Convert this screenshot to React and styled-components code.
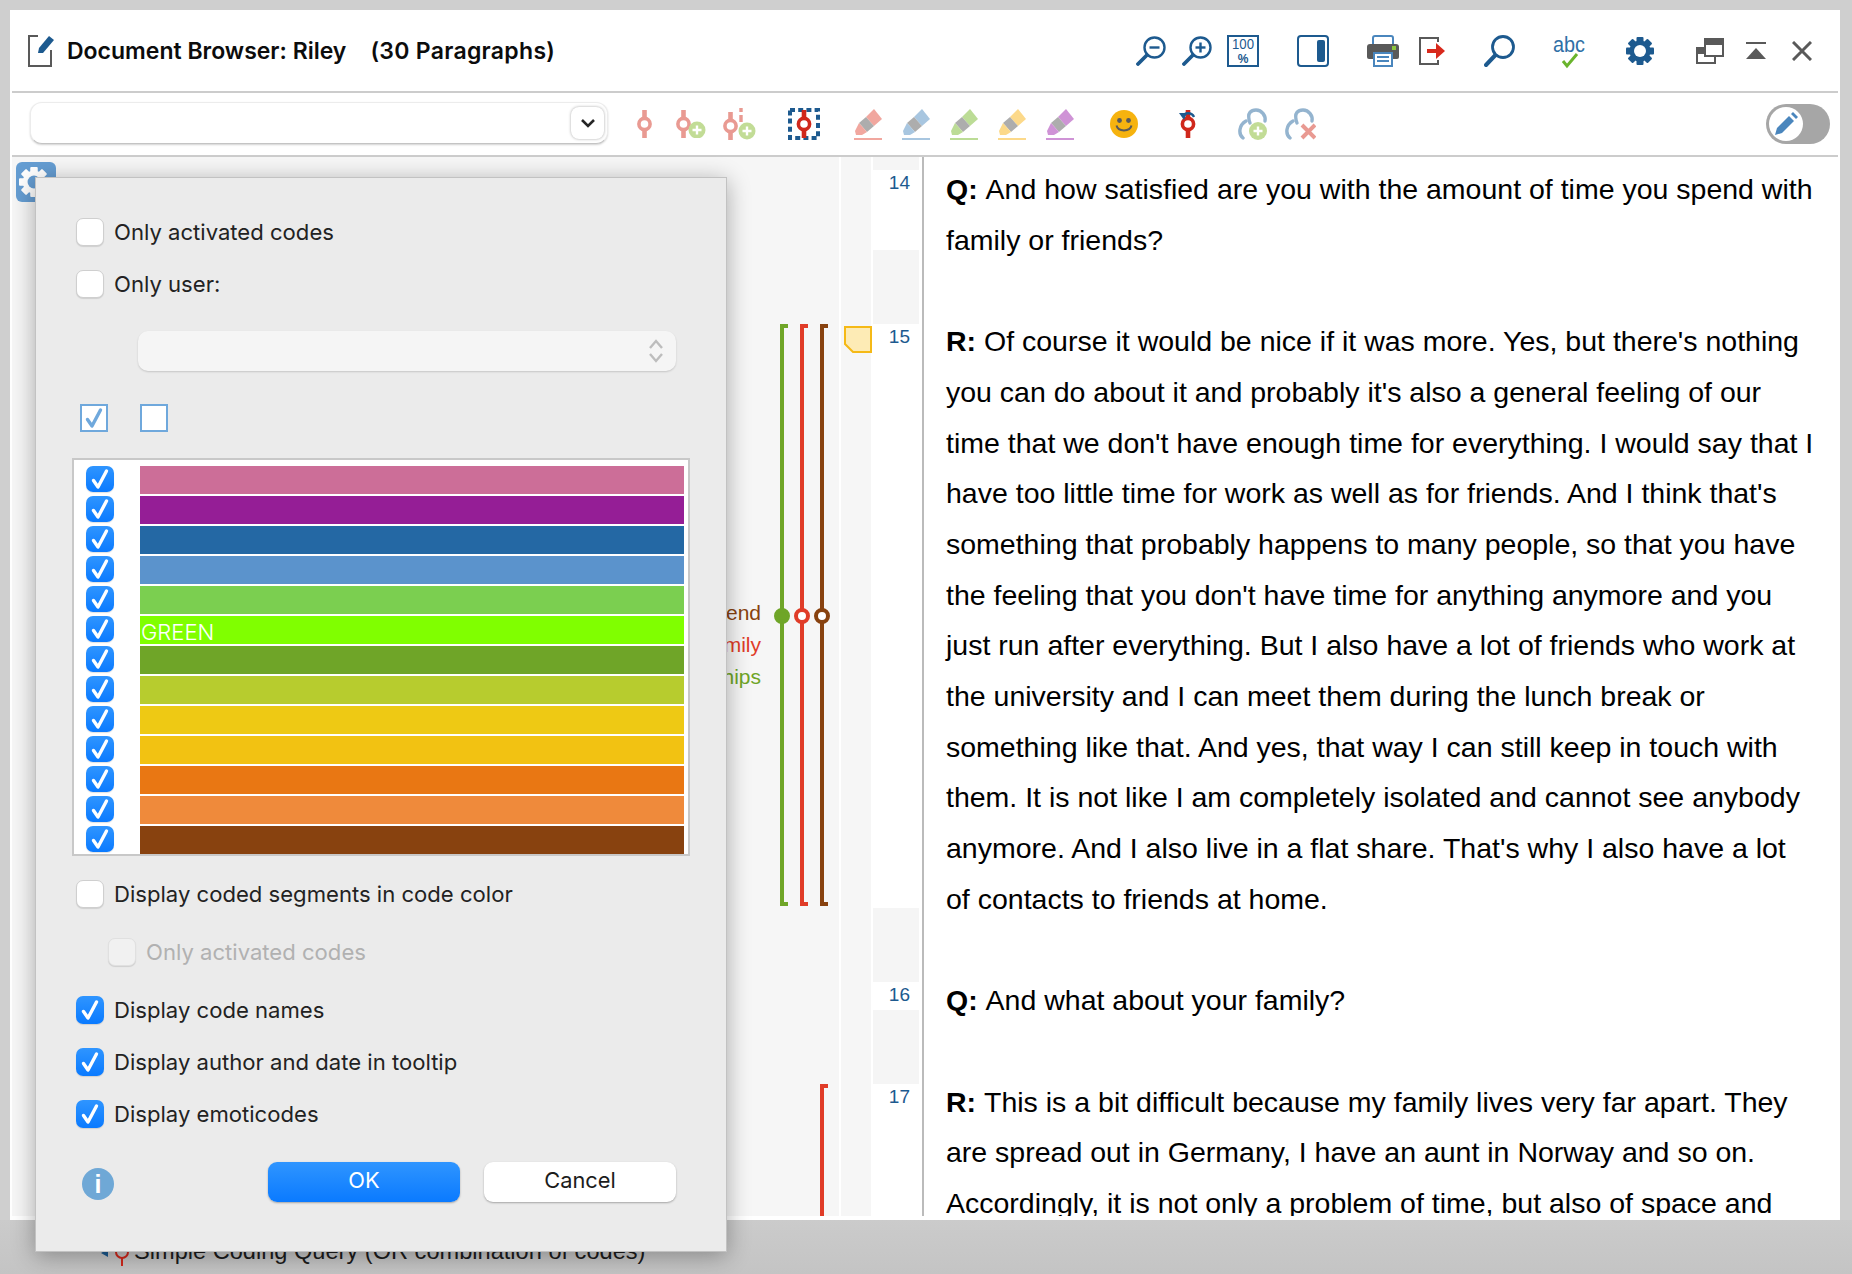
import styled, { createGlobalStyle } from "styled-components";

const NAVY = "#1d5a8f";
const GREY_ICON = "#595959";
const SANS = `"Liberation Sans", Arial, sans-serif`;
const UI = `Inter, "Noto Sans", sans-serif`;

const CODE_COLORS = [
  "#cc6e98", "#951e96", "#2468a4", "#5b93cc", "#7bcf50", "#80ff00", "#6fa528",
  "#b7cc2e", "#eec914", "#f2c212", "#e97713", "#ef8a3b", "#88420f",
];

const PENS = ["#f1a79f", "#a8c6e0", "#bcdc96", "#fcd98a", "#cf93d6"];

const PARAGRAPHS = [
  {
    speaker: "Q:",
    lines: [
      "And how satisfied are you with the amount of time you spend with",
      "family or friends?",
    ],
  },
  {
    speaker: "R:",
    lines: [
      "Of course it would be nice if it was more. Yes, but there's nothing",
      "you can do about it and probably it's also a general feeling of our",
      "time that we don't have enough time for everything. I would say that I",
      "have too little time for work as well as for friends. And I think that's",
      "something that probably happens to many people, so that you have",
      "the feeling that you don't have time for anything anymore and you",
      "just run after everything. But I also have a lot of friends who work at",
      "the university and I can meet them during the lunch break or",
      "something like that. And yes, that way I can still keep in touch with",
      "them. It is not like I am completely isolated and cannot see anybody",
      "anymore. And I also live in a flat share. That's why I also have a lot",
      "of contacts to friends at home.",
    ],
  },
  { speaker: "Q:", lines: ["And what about your family?"] },
  {
    speaker: "R:",
    lines: [
      "This is a bit difficult because my family lives very far apart. They",
      "are spread out in Germany, I have an aunt in Norway and so on.",
      "Accordingly, it is not only a problem of time, but also of space and",
    ],
  },
];

const NUMBER_CELLS = [
  { height: 13 },
  { height: 80, label: "14" },
  { height: 74 },
  { height: 584, label: "15" },
  { height: 74 },
  { height: 28, label: "16" },
  { height: 74 },
  { height: 132, label: "17" },
];

const BRACKETS = [
  { color: "#6fa528", left: 768, top: 167, height: 582, dot: "solid" },
  { color: "#e03c28", left: 788, top: 167, height: 582, dot: "ring" },
  { color: "#88420f", left: 808, top: 167, height: 582, dot: "ring" },
  { color: "#e03c28", left: 808, top: 927, height: 140 },
];

const GlobalStyle = createGlobalStyle`
  html, body { margin: 0; padding: 0; }
  body { background: #cfcfcf; font-family: ${SANS}; }
  * { box-sizing: border-box; }
`;

const Page = styled.div`
  position: relative;
  width: 1852px;
  height: 1274px;
  overflow: hidden;
  background: #cfcfcf;
  display: flex;
  flex-direction: column;
`;

const Win = styled.div`
  width: 1830px;
  height: 1210px;
  margin: 10px 0 0 10px;
  padding: 0 2px 4px;
  background: #fff;
  display: flex;
  flex-direction: column;
`;

const TitleBar = styled.header`
  height: 83px;
  flex: none;
  display: flex;
  align-items: center;
  padding: 0 26px 0 16px;
  border-bottom: 2px solid #cccccc;
`;

const Title = styled.h1`
  flex: 1;
  margin: 0 0 0 13px;
  display: flex;
  gap: 24px;
  font: 600 23px ${UI};
  color: #0c0c0c;
  white-space: nowrap;

  span + span {
    letter-spacing: 0.3px;
  }
`;

const IconSlot = styled.span`
  display: flex;
  flex: none;
  margin-left: ${({ $gap }) => $gap}px;
`;

const IconRow = styled.div`
  display: flex;
  align-items: center;
`;

const ToolBar = styled.div`
  height: 64px;
  flex: none;
  display: flex;
  align-items: center;
  padding: 0 8px 0 18px;
  border-bottom: 2px solid #cccccc;
`;

const Combo = styled.div`
  width: 578px;
  height: 42px;
  margin-top: -2px;
  flex: none;
  display: flex;
  align-items: center;
  justify-content: flex-end;
  padding-right: 3px;
  background: #fff;
  border: 1px solid #ececec;
  border-bottom-color: #c4c4c4;
  border-radius: 12px;
  box-shadow: 0 1px 2px rgba(0, 0, 0, 0.18);
`;

const ComboButton = styled.span`
  width: 33px;
  height: 32px;
  display: flex;
  align-items: center;
  justify-content: center;
  background: #fff;
  border-radius: 8px;
  box-shadow: 0 0 3px rgba(0, 0, 0, 0.35);
`;

const Toggle = styled.div`
  width: 64px;
  height: 40px;
  margin-left: auto;
  padding: 3px;
  flex: none;
  background: #a6a6a6;
  border-radius: 20px;
`;

const ToggleKnob = styled.span`
  width: 34px;
  height: 34px;
  display: flex;
  align-items: center;
  justify-content: center;
  background: #fff;
  border-radius: 50%;
`;

const Body = styled.main`
  flex: 1;
  min-height: 0;
  display: flex;
  overflow: hidden;
`;

const CodeMargin = styled.div`
  position: relative;
  width: 827px;
  flex: none;
  background: #f6f6f6;
`;

const GearButton = styled.span`
  position: absolute;
  left: 4px;
  top: 5px;
  width: 40px;
  height: 40px;
  display: flex;
  align-items: center;
  justify-content: flex-start;
  padding-left: 3px;
  background: #659dd2;
  border-radius: 6px;
`;

const Bracket = styled.div`
  position: absolute;
  width: 8px;
  border-left: 4px solid ${({ $color }) => $color};
  border-top: 4px solid ${({ $color }) => $color};
  border-bottom: ${({ $open, $color }) => ($open ? "none" : `4px solid ${$color}`)};
`;

const BracketDot = styled.span`
  position: absolute;
  left: -10px;
  top: 280px;
  width: 16px;
  height: 16px;
  border-radius: 50%;
  background: ${({ $solid, $color }) => ($solid ? $color : "#fff")};
  border: 4px solid ${({ $color }) => $color};
`;

const CodeNames = styled.div`
  position: absolute;
  right: 78px;
  top: 440px;
  text-align: right;
  font: 21px/32px ${SANS};
`;

const CodeName = styled.div`
  color: ${({ $color }) => $color};
`;

const MemoColumn = styled.div`
  width: 30px;
  margin-left: 2px;
  flex: none;
  padding: 169px 0 0 3px;
  background: #f6f6f6;
`;

const NumberColumn = styled.div`
  width: 46px;
  margin: 0 3px 0 2px;
  flex: none;
  display: flex;
  flex-direction: column;
`;

const NumberCell = styled.div`
  height: ${({ $height }) => $height}px;
  flex: none;
  padding: 2px 9px 0 0;
  text-align: right;
  font: 19px/21px ${SANS};
  color: ${NAVY};
  background: ${({ $blank }) => ($blank ? "#f5f5f5" : "#fff")};
`;

const TextPane = styled.article`
  flex: 1;
  padding: 7px 0 0 22px;
  border-left: 2px solid #bbbbbb;
  color: #000;
  font: 28.5px/50.7px ${SANS};
`;

const Paragraph = styled.div`
  margin-bottom: 50.7px;
`;

const Line = styled.div`
  white-space: nowrap;
`;

const Speaker = styled.b`
  font-weight: 700;
`;

const BottomStrip = styled.div`
  flex: 1;
  display: flex;
  align-items: center;
  gap: 3px;
  padding: 8px 0 0 95px;
  background: linear-gradient(#cbcbcb, #c4c4c4);
  font: 23.6px/30px ${SANS};
  color: #1c1c1c;
  white-space: nowrap;
`;

const Dialog = styled.section`
  position: absolute;
  left: 35px;
  top: 177px;
  width: 692px;
  height: 1075px;
  padding: 40px 0 0 40px;
  background: #ebebeb;
  border: 1px solid #c2c2c2;
  box-shadow: 0 4px 22px rgba(0, 0, 0, 0.32);
  font: 22.1px/28px ${UI};
  color: #222;
`;

const Option = styled.label`
  display: flex;
  align-items: center;
  gap: 10px;
  height: 28px;
  margin-top: ${({ $top }) => $top || 0}px;
  margin-left: ${({ $left }) => $left || 0}px;
  color: ${({ $disabled }) => ($disabled ? "#b1b1b1" : "#222")};
  white-space: nowrap;
`;

const CheckBox = styled.span`
  width: 28px;
  height: ${({ $short }) => ($short ? 26 : 28)}px;
  flex: none;
  display: flex;
  align-items: center;
  justify-content: center;
  border-radius: 7px;
  background: ${({ $checked, $disabled }) =>
    $checked
      ? "linear-gradient(#2f95ff, #0a7aff)"
      : $disabled
      ? "#f1f1f1"
      : "#fff"};
  border: ${({ $checked, $disabled }) =>
    $checked ? "none" : `1px solid ${$disabled ? "#e0e0e0" : "#cfcfcf"}`};
  box-shadow: 0 1px 1px rgba(0, 0, 0, 0.12);
`;

const UserSelect = styled.div`
  width: 538px;
  height: 40px;
  margin: 33px 0 0 62px;
  display: flex;
  align-items: center;
  justify-content: flex-end;
  padding-right: 13px;
  background: #f5f5f5;
  border-radius: 10px;
  box-shadow: 0 1px 2px rgba(0, 0, 0, 0.16);
`;

const SelectAllRow = styled.div`
  display: flex;
  gap: 32px;
  margin: 33px 0 0 4px;
`;

const SquareBox = styled.span`
  width: 28px;
  height: 28px;
  display: flex;
  align-items: center;
  justify-content: center;
  background: #fff;
  border: 2px solid #6fa8dc;
`;

const ColorList = styled.div`
  width: 618px;
  height: 398px;
  margin: 26px 0 0 -4px;
  padding: 6px 4px 0 12px;
  display: flex;
  flex-direction: column;
  gap: 2px;
  background: #fff;
  border: 2px solid #c8c8c8;
`;

const ColorRow = styled.div`
  height: 28px;
  flex: none;
  display: flex;
  gap: 26px;
`;

const ColorBar = styled.div`
  flex: 1;
  padding: 2px 0 0 1px;
  background: ${({ $color }) => $color};
  color: #fff;
  font: 300 22px/28px ${UI};
`;

const DialogFooter = styled.div`
  display: flex;
  align-items: flex-start;
  margin: 34px 0 0 6px;
`;

const InfoBadge = styled.span`
  width: 32px;
  height: 32px;
  margin: 6px 154px 0 0;
  display: flex;
  align-items: center;
  justify-content: center;
  border-radius: 50%;
  background: #6fa8d6;
  color: #fff;
  font: 700 25px/32px ${SANS};
`;

const DialogButton = styled.button`
  width: 192px;
  height: 40px;
  margin-right: 24px;
  border: none;
  border-radius: 9px;
  padding: 0 0 5px;
  font: 21.8px/28px ${UI};
  color: ${({ $primary }) => ($primary ? "#fff" : "#1c1c1c")};
  background: ${({ $primary }) =>
    $primary ? "linear-gradient(#2f95ff, #0a7aff)" : "#fff"};
  box-shadow: 0 1px 2px rgba(0, 0, 0, 0.3);
`;

const Tick = ({ color = "#fff", width = 20, height = 22, weight = 3.4 }) => (
  <svg width={width} height={height} viewBox="0 0 20 22" fill="none">
    <path
      d="M3.5 12.5 L8 19 L16.5 3"
      stroke={color}
      strokeWidth={weight}
      strokeLinecap="round"
      strokeLinejoin="round"
    />
  </svg>
);

const PlusBadge = ({ cx, cy, r = 8.5 }) => (
  <>
    <circle cx={cx} cy={cy} r={r} fill="#c2dc96" />
    <path
      d={`M${cx - 4.5} ${cy}H${cx + 4.5}M${cx} ${cy - 4.5}V${cy + 4.5}`}
      stroke="#fff"
      strokeWidth="2.4"
    />
  </>
);

const CodeMark = ({ x = 7.5, y = 0, color, fill = "#fff", h = 28 }) => (
  <g>
    <path d={`M${x} ${y}V${y + h}`} stroke={color} strokeWidth="4.6" />
    <circle cx={x} cy={y + h / 2} r="5.6" fill={fill} stroke={color} strokeWidth="3.6" />
  </g>
);

const ZoomIcon = ({ sign }) => (
  <svg width="30" height="30" viewBox="0 0 30 30" fill="none" stroke={NAVY}>
    <circle cx="18.5" cy="11.5" r="10" strokeWidth="2.4" />
    <path d="M11 19 L2 28" strokeWidth="3.8" strokeLinecap="round" />
    <path d="M13.5 11.5H23.5" strokeWidth="2.4" />
    {sign === "plus" && <path d="M18.5 6.5V16.5" strokeWidth="2.4" />}
  </svg>
);

const FullSizeIcon = () => (
  <svg width="32" height="32" viewBox="0 0 32 32">
    <rect x="1" y="1" width="30" height="30" fill="none" stroke={NAVY} strokeWidth="2" />
    <text x="16" y="14" textAnchor="middle" fontFamily={SANS} fontSize="15" fill={NAVY} textLength="22" lengthAdjust="spacingAndGlyphs">100</text>
    <text x="16" y="28" textAnchor="middle" fontFamily={SANS} fontSize="12" fontWeight="700" fill={NAVY}>%</text>
  </svg>
);

const PanelIcon = () => (
  <svg width="32" height="32" viewBox="0 0 32 32">
    <rect x="1" y="1" width="30" height="30" rx="3" fill="none" stroke={NAVY} strokeWidth="2" />
    <rect x="20" y="5" width="8" height="22" rx="2" fill={NAVY} />
  </svg>
);

const PrinterIcon = () => (
  <svg width="32" height="32" viewBox="0 0 32 32">
    <rect x="6" y="1" width="20" height="12" rx="2" fill="#fff" stroke="#4a86bd" strokeWidth="2" />
    <path d="M3 9H29a3 3 0 0 1 3 3V22a2 2 0 0 1-2 2H2a2 2 0 0 1-2-2V12a3 3 0 0 1 3-3Z" fill={GREY_ICON} />
    <rect x="25" y="11" width="4" height="4" fill="#8cc63f" />
    <rect x="7" y="18" width="18" height="13" fill="#fff" stroke="#4a86bd" strokeWidth="2" />
    <path d="M10 22H22M10 26H22" stroke="#4a86bd" strokeWidth="2" />
  </svg>
);

const ExportIcon = () => (
  <svg width="26" height="28" viewBox="0 0 26 28" fill="none">
    <path d="M19 5V1H1V27H19V23" stroke={GREY_ICON} strokeWidth="2" />
    <path d="M8 12H17V6L26 14L17 22V16H8Z" fill="#d8291c" />
  </svg>
);

const SearchIcon = () => (
  <svg width="31" height="32" viewBox="0 0 31 32" fill="none" stroke={NAVY}>
    <circle cx="19" cy="12" r="10.5" strokeWidth="2.8" />
    <path d="M11 20.5 L2 30" strokeWidth="4" strokeLinecap="round" />
  </svg>
);

const SpellIcon = () => (
  <svg width="40" height="40" viewBox="-4 -4 40 40">
    <text x="16" y="17" textAnchor="middle" fontFamily={SANS} fontSize="22" fill="#2f6fa6" textLength="32" lengthAdjust="spacingAndGlyphs">abc</text>
    <path d="M10 26 L14 31 L24 19" fill="none" stroke="#6ab42d" strokeWidth="3" />
  </svg>
);

const GearIcon = ({ color = NAVY, hole = "#fff", size = 28 }) => (
  <svg width={size} height={size} viewBox="0 0 28 28">
    {[0, 45, 90, 135].map((angle) => (
      <rect key={angle} x="10.5" y="0" width="7" height="28" rx="1" fill={color} transform={`rotate(${angle} 14 14)`} />
    ))}
    <circle cx="14" cy="14" r="10.5" fill={color} />
    <circle cx="14" cy="14" r="6" fill={hole} />
  </svg>
);

const RestoreIcon = () => (
  <svg width="28" height="26" viewBox="0 0 28 26" fill="none" stroke={GREY_ICON} strokeWidth="2">
    <rect x="1" y="10" width="18" height="15" />
    <rect x="1" y="10" width="7" height="5" fill={GREY_ICON} />
    <rect x="9" y="1" width="18" height="17" fill="#fff" />
    <rect x="9" y="1" width="18" height="5" fill={GREY_ICON} />
  </svg>
);

const TopIcon = () => (
  <svg width="20" height="17" viewBox="0 0 20 17">
    <rect width="20" height="2" fill={GREY_ICON} />
    <path d="M10 6 L20 17 H0 Z" fill={GREY_ICON} />
  </svg>
);

const CloseIcon = () => (
  <svg width="20" height="20" viewBox="0 0 20 20" stroke={GREY_ICON} strokeWidth="3">
    <path d="M1 1L19 19M19 1L1 19" />
  </svg>
);

const DocEditIcon = () => (
  <svg width="26" height="32" viewBox="0 0 26 32" fill="none">
    <path d="M10 1H1V31H23V15" stroke={GREY_ICON} strokeWidth="2" />
    <path d="M21 1L26 5L15 18L10 18L11 13Z" fill={NAVY} />
  </svg>
);

const CodeIcon = () => (
  <svg width="15" height="28" viewBox="0 0 15 28">
    <CodeMark color="#e99a92" />
  </svg>
);

const CodePlusIcon = () => (
  <svg width="30" height="28" viewBox="0 0 30 28">
    <CodeMark color="#e99a92" />
    <PlusBadge cx={21} cy={20} />
  </svg>
);

const CodeInfoPlusIcon = () => (
  <svg width="34" height="32" viewBox="0 0 34 32">
    <CodeMark y={4} color="#e99a92" />
    <path d="M18 0V4M18 7V14" stroke="#e99a92" strokeWidth="3.4" />
    <PlusBadge cx={24} cy={23} />
  </svg>
);

const FocusCodeIcon = () => (
  <svg width="32" height="32" viewBox="0 0 32 32">
    <rect x="2" y="2" width="28" height="28" fill="none" stroke={NAVY} strokeWidth="4" strokeDasharray="5 3.2" />
    <CodeMark x={16} y={2} color="#d0281c" />
  </svg>
);

const PenIcon = ({ color }) => (
  <svg width="28" height="31" viewBox="0 0 28 31">
    <path d="M20 0L28 10L20 17L12 8Z" fill={color} />
    <path d="M12 8L20 17L13 23L5 14Z" fill="#adadad" />
    <path d="M5 14L13 23L8 26H2L1 22Z" fill={color} />
    <rect y="29" width="28" height="2" fill={color} />
  </svg>
);

const SmileyIcon = () => (
  <svg width="28" height="28" viewBox="0 0 28 28" fill="none">
    <circle cx="14" cy="14" r="14" fill="#f6b30f" />
    <circle cx="9.5" cy="10.5" r="2.4" fill={GREY_ICON} />
    <circle cx="18.5" cy="10.5" r="2.4" fill={GREY_ICON} />
    <path d="M6.5 15.5C8 22 20 22 21.5 15.5" stroke={GREY_ICON} strokeWidth="2" />
  </svg>
);

const UndoCodeIcon = () => (
  <svg width="20" height="28" viewBox="0 0 20 28">
    <CodeMark x={10} y={0} color="#d0281c" />
    <path d="M5 7C6 2 14 2 16 7" fill="none" stroke={NAVY} strokeWidth="2.4" />
    <path d="M1 3L9 3L6 10Z" fill={NAVY} />
  </svg>
);

const LinkArcs = () => (
  <g fill="none" stroke="#94b4cf" strokeWidth="3.4" strokeLinecap="round">
    <path d="M12 15C8 4 14 2 18 2C24 2 28 8 27 13" />
    <path d="M8 13C1 17 0 26 5 30" />
  </g>
);

const LinkPlusIcon = () => (
  <svg width="30" height="32" viewBox="0 0 30 32">
    <LinkArcs />
    <PlusBadge cx={20} cy={23} r={9} />
  </svg>
);

const LinkCrossIcon = () => (
  <svg width="31" height="32" viewBox="0 0 31 32">
    <LinkArcs />
    <path d="M17 17L30 30M30 17L17 30" stroke="#e99a92" strokeWidth="4" />
  </svg>
);

const PencilIcon = () => (
  <svg width="26" height="26" viewBox="0 0 26 26">
    <path d="M4 17L16 5L21 10L9 22L2 24Z" fill="#4a86bd" />
    <path d="M18 3L20 1L25 6L23 8Z" fill="#4a86bd" />
  </svg>
);

const Chevron = () => (
  <svg width="16" height="10" viewBox="0 0 16 10" fill="none" stroke="#262626" strokeWidth="2.6">
    <path d="M2 2L8 8L14 2" />
  </svg>
);

const UpDown = () => (
  <svg width="14" height="26" viewBox="0 0 14 26" fill="none" stroke="#bdbdbd" strokeWidth="2.4">
    <path d="M1 10L7 3L13 10M1 16L7 23L13 16" />
  </svg>
);

const MemoIcon = () => (
  <svg width="28" height="27" viewBox="0 0 28 27">
    <path d="M1 1H27V26H9L1 18Z" fill="#fdebb5" stroke="#f5b916" strokeWidth="2" />
  </svg>
);

const QueryIcon = () => (
  <svg width="36" height="30" viewBox="0 0 36 30" fill="none">
    <path d="M6 17L13 13V21Z" fill={NAVY} />
    <circle cx="27" cy="16" r="6" stroke="#d0281c" strokeWidth="2" />
    <path d="M27 22V30" stroke="#d0281c" strokeWidth="2" />
  </svg>
);

const HEADER_ICONS = [
  { gap: 0, icon: <ZoomIcon sign="minus" /> },
  { gap: 16, icon: <ZoomIcon sign="plus" /> },
  { gap: 15, icon: <FullSizeIcon /> },
  { gap: 38, icon: <PanelIcon /> },
  { gap: 38, icon: <PrinterIcon /> },
  { gap: 20, icon: <ExportIcon /> },
  { gap: 39, icon: <SearchIcon /> },
  { gap: 34, icon: <SpellIcon /> },
  { gap: 37, icon: <GearIcon /> },
  { gap: 42, icon: <RestoreIcon /> },
  { gap: 22, icon: <TopIcon /> },
  { gap: 26, icon: <CloseIcon /> },
];

const TOOL_ICONS = [
  { gap: 29, icon: <CodeIcon /> },
  { gap: 24, icon: <CodePlusIcon /> },
  { gap: 17, icon: <CodeInfoPlusIcon /> },
  { gap: 31, icon: <FocusCodeIcon /> },
  ...PENS.map((color, index) => ({
    gap: index === 0 ? 34 : 20,
    icon: <PenIcon color={color} />,
  })),
  { gap: 36, icon: <SmileyIcon /> },
  { gap: 40, icon: <UndoCodeIcon /> },
  { gap: 40, icon: <LinkPlusIcon /> },
  { gap: 17, icon: <LinkCrossIcon /> },
];

const renderIcons = (icons) =>
  icons.map(({ gap, icon }, index) => (
    <IconSlot key={index} $gap={gap}>
      {icon}
    </IconSlot>
  ));

const CheckOption = ({ children, checked, disabled, top, left }) => (
  <Option $top={top} $left={left} $disabled={disabled}>
    <CheckBox $checked={checked} $disabled={disabled}>
      {checked && <Tick />}
    </CheckBox>
    <span>{children}</span>
  </Option>
);

const SettingsDialog = () => (
  <Dialog>
    <CheckOption>Only activated codes</CheckOption>
    <CheckOption top={24}>Only user:</CheckOption>
    <UserSelect>
      <UpDown />
    </UserSelect>
    <SelectAllRow>
      <SquareBox>
        <Tick color="#6fa8dc" />
      </SquareBox>
      <SquareBox />
    </SelectAllRow>
    <ColorList>
      {CODE_COLORS.map((color) => (
        <ColorRow key={color}>
          <CheckBox $checked $short>
            <Tick />
          </CheckBox>
          <ColorBar $color={color}>{color === "#80ff00" && "GREEN"}</ColorBar>
        </ColorRow>
      ))}
    </ColorList>
    <CheckOption top={24}>Display coded segments in code color</CheckOption>
    <CheckOption top={30} left={32} disabled>
      Only activated codes
    </CheckOption>
    <CheckOption top={30} checked>
      Display code names
    </CheckOption>
    <CheckOption top={24} checked>
      Display author and date in tooltip
    </CheckOption>
    <CheckOption top={24} checked>
      Display emoticodes
    </CheckOption>
    <DialogFooter>
      <InfoBadge>i</InfoBadge>
      <DialogButton $primary>OK</DialogButton>
      <DialogButton>Cancel</DialogButton>
    </DialogFooter>
  </Dialog>
);

const App = () => (
  <Page>
    <GlobalStyle />
    <Win>
      <TitleBar>
        <DocEditIcon />
        <Title>
          <span>Document Browser: Riley</span>
          <span>(30 Paragraphs)</span>
        </Title>
        <IconRow>{renderIcons(HEADER_ICONS)}</IconRow>
      </TitleBar>
      <ToolBar>
        <Combo>
          <ComboButton>
            <Chevron />
          </ComboButton>
        </Combo>
        {renderIcons(TOOL_ICONS)}
        <Toggle>
          <ToggleKnob>
            <PencilIcon />
          </ToggleKnob>
        </Toggle>
      </ToolBar>
      <Body>
        <CodeMargin>
          <GearButton>
            <GearIcon color="#fff" hole="#659dd2" size={30} />
          </GearButton>
          <CodeNames>
            <CodeName $color="#88420f">friend</CodeName>
            <CodeName $color="#e03c28">Family</CodeName>
            <CodeName $color="#6fa528">Relationships</CodeName>
          </CodeNames>
          {BRACKETS.map(({ color, left, top, height, dot }) => (
            <Bracket
              key={`${left}-${top}`}
              $color={color}
              $open={!dot}
              style={{ left, top, height }}
            >
              {dot && <BracketDot $color={color} $solid={dot === "solid"} />}
            </Bracket>
          ))}
        </CodeMargin>
        <MemoColumn>
          <MemoIcon />
        </MemoColumn>
        <NumberColumn>
          {NUMBER_CELLS.map(({ height, label }, index) => (
            <NumberCell key={index} $height={height} $blank={!label}>
              {label}
            </NumberCell>
          ))}
        </NumberColumn>
        <TextPane>
          {PARAGRAPHS.map(({ speaker, lines }, index) => (
            <Paragraph key={index}>
              {lines.map((line, lineIndex) => (
                <Line key={lineIndex}>
                  {lineIndex === 0 && <Speaker>{speaker} </Speaker>}
                  {line}
                </Line>
              ))}
            </Paragraph>
          ))}
        </TextPane>
      </Body>
    </Win>
    <BottomStrip>
      <QueryIcon />
      <span>Simple Coding Query (OR combination of codes)</span>
    </BottomStrip>
    <SettingsDialog />
  </Page>
);

export default App;
